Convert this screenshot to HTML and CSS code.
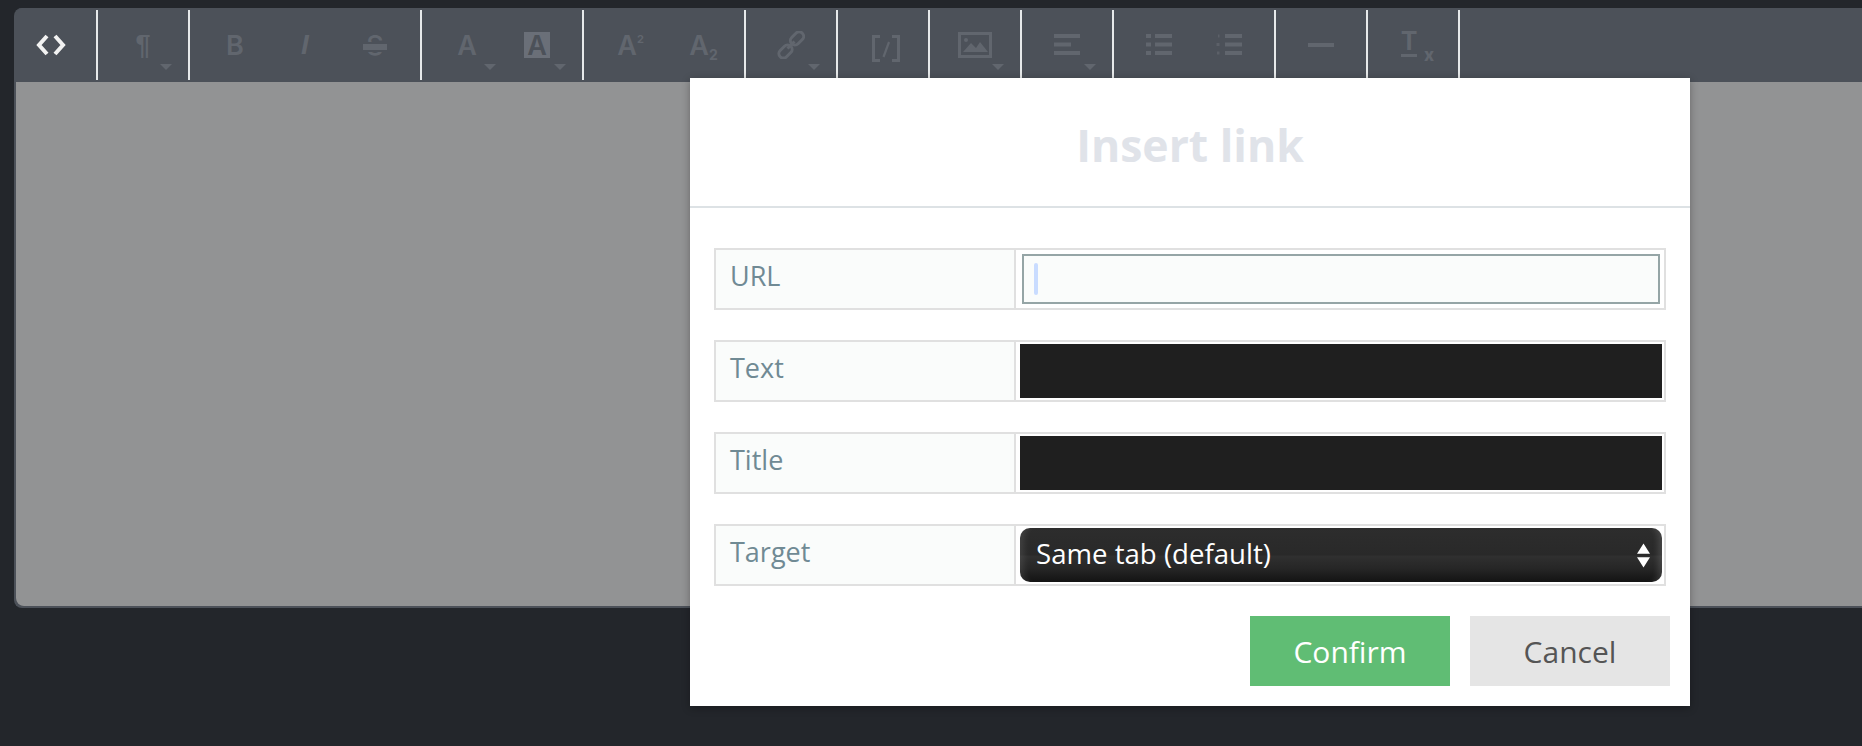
FILE: index.html
```html
<!DOCTYPE html>
<html lang="en">
<head>
<meta charset="utf-8">
<title>Insert link</title>
<link rel="stylesheet" href="styles.css">
</head>
<body>
<div class="editor">
  <div class="toolbar">
    <div class="group first">
      <div class="btn active"><svg width="30" height="22" viewBox="0 0 30 22"><path d="M11 2 3 11l8 9M19 2l8 9-8 9" fill="none" stroke="currentColor" stroke-width="4"/></svg></div>
    </div>
    <div class="group"><div class="btn drop"><span class="glyph para">¶</span></div></div>
    <div class="group">
      <div class="btn"><span class="glyph bold">B</span></div>
      <div class="btn"><span class="glyph ital">I</span></div>
      <div class="btn"><span class="glyph strike">S</span></div>
    </div>
    <div class="group">
      <div class="btn drop"><span class="glyph bold">A</span></div>
      <div class="btn drop"><span class="glyph boxed">A</span></div>
    </div>
    <div class="group">
      <div class="btn"><span class="glyph bold nudge">A</span><span class="sup">2</span></div>
      <div class="btn"><span class="glyph bold">A</span><span class="sub">2</span></div>
    </div>
    <div class="group">
      <div class="btn drop"><svg width="28" height="28" viewBox="0 0 28 28"><g fill="none" stroke="currentColor" stroke-width="3"><rect x="12.500" y="3" width="15" height="9" rx="4.500" transform="rotate(-45 20 7.500)"/><rect x="1" y="16" width="15" height="9" rx="4.500" transform="rotate(-45 8.500 20.500)"/><path d="M10.500 17.500l7-7"/></g></svg></div>
    </div>
    <div class="group">
      <div class="btn"><svg class="shift" width="28" height="27" viewBox="0 0 28 27"><path d="M8 1.500H1.500v24H8M20 1.500h6.500v24H20" fill="none" stroke="currentColor" stroke-width="3"/><path d="M17 7l-5.500 15" fill="none" stroke="currentColor" stroke-width="2.200"/></svg></div>
    </div>
    <div class="group">
      <div class="btn drop"><svg width="34" height="26" viewBox="0 0 34 26"><path d="M1.500 1.500h31v23h-31z" fill="none" stroke="currentColor" stroke-width="3"/><circle cx="8" cy="8" r="2" fill="currentColor"/><path d="M5 20l8-9 5 5 4-6 8 10z" fill="currentColor"/></svg></div>
    </div>
    <div class="group">
      <div class="btn drop"><svg width="26" height="22" viewBox="0 0 26 22"><path d="M0 0h26v4H0zM0 8.500h17v4H0zM0 17h26v4H0z" fill="currentColor"/></svg></div>
    </div>
    <div class="group">
      <div class="btn"><svg width="26" height="22" viewBox="0 0 26 22"><path d="M0 0h5v4H0zM9 0h17v4H9zM0 8.500h5v4H0zM9 8.500h17v4H9zM0 17h5v4H0zM9 17h17v4H9z" fill="currentColor"/></svg></div>
      <div class="btn"><svg width="26" height="22" viewBox="0 0 26 22"><path d="M9 0h17v4H9zM9 8.500h17v4H9zM9 17h17v4H9z" fill="currentColor"/><path d="M2 0.500h1.500v3H2zM0.500 9h3v3h-3zM1 17.500h2.500v3H1z" fill="currentColor" fill-opacity=".75"/></svg></div>
    </div>
    <div class="group">
      <div class="btn"><svg width="26" height="4" viewBox="0 0 26 4"><path d="M0 0h26v4H0z" fill="currentColor"/></svg></div>
    </div>
    <div class="group">
      <div class="btn"><span class="glyph clear">T</span><span class="clear-x">x</span></div>
    </div>
  </div>
  <div class="content"></div>
</div>

<div class="modal">
  <h2 class="modal-title">Insert link</h2>
  <form class="modal-form">
    <div class="row">
      <label class="row-label" for="url">URL</label>
      <div class="row-field focus"><input id="url" class="url" type="text"><span class="cursor"></span></div>
    </div>
    <div class="row">
      <label class="row-label" for="text">Text</label>
      <div class="row-field"><input id="text" class="dark" type="text"></div>
    </div>
    <div class="row">
      <label class="row-label" for="title">Title</label>
      <div class="row-field"><input id="title" class="dark" type="text"></div>
    </div>
    <div class="row">
      <label class="row-label" for="target">Target</label>
      <div class="row-field">
        <select id="target" class="select"><option>Same tab (default)</option></select>
        <svg class="updown" width="13" height="25" viewBox="0 0 14 26"><path d="M7 0l7 11H0zM0 15h14L7 26z" fill="#fff"/></svg>
      </div>
    </div>
    <div class="actions">
      <button class="action confirm" type="button">Confirm</button>
      <button class="action cancel" type="button">Cancel</button>
    </div>
  </form>
</div>
</body>
</html>
```
FILE: styles.css
```css
* { box-sizing: border-box; }
html, body { height: 100%; }
body {
  margin: 0;
  padding: 8px 0 0 14px;
  background: #23262b;
  overflow: hidden;
  font-family: "Open Sans", sans-serif;
}
.editor {
  height: 600px;
  border-left: 2px solid #4c5159;
  border-bottom: 2px solid #4c5159;
  border-radius: 8px 0 0 8px;
  display: flex;
  flex-direction: column;
  overflow: hidden;
  background: #4c5159;
}
.toolbar {
  display: flex;
  height: 74px;
  padding: 2px 0;
  background: #4c5159;
  color: #61666e;
  flex: none;
}
.group {
  display: flex;
  padding: 0 10px;
  border-right: 2px solid #e6e9ea;
  flex: none;
}
.group.first { padding-left: 0; }
.btn {
  position: relative;
  width: 70px;
  height: 70px;
  display: flex;
  align-items: center;
  justify-content: center;
}
.btn.active { color: #f2f2f2; }
.btn.drop::after {
  content: "";
  position: absolute;
  right: 6px;
  top: 54px;
  border-left: 6px solid transparent;
  border-right: 6px solid transparent;
  border-top: 6px solid #61666e;
}
.shift { position: relative; left: 3px; top: 3px; }
.glyph {
  font-family: "Inter", "Liberation Sans", sans-serif;
  font-size: 27px;
  line-height: 1;
  font-weight: 600;
}
.para {
  font-family: "Liberation Sans", sans-serif;
  font-size: 27px;
  font-weight: 700;
}
.ital {
  font-family: "Liberation Sans", sans-serif;
  font-style: italic;
  font-weight: 700;
  font-size: 28px;
}
.nudge { position: relative; left: -2px; }
.strike {
  font-weight: 500;
  position: relative;
}
.strike::after {
  content: "";
  position: absolute;
  left: -3px;
  right: -3px;
  top: 10px;
  height: 6px;
  background: #61666e;
  background-clip: content-box;
  border-top: 2px solid #4c5159;
  border-bottom: 2px solid #4c5159;
}
.boxed {
  width: 26px;
  height: 26px;
  background: #6a6f78;
  color: #4c5159;
  display: flex;
  align-items: center;
  justify-content: center;
  font-size: 27px;
  font-weight: 600;
}
.sup, .sub {
  font-family: "Inter", "Liberation Sans", sans-serif;
  font-weight: 700;
  line-height: 1;
  position: absolute;
}
.sup { font-size: 11px; left: 43px; top: 24px; }
.sub { font-size: 14px; left: 45px; top: 38px; }
.clear {
  font-size: 25px;
  font-weight: 700;
  position: relative;
  left: -4px;
  top: -2px;
  border-bottom: 3px solid #61666e;
}
.clear-x {
  position: absolute;
  left: 46px;
  top: 37px;
  font-family: "Inter", "Liberation Sans", sans-serif;
  font-size: 17px;
  line-height: 1;
  font-weight: 800;
}
.content {
  flex: 1;
  background: #929394;
  border-radius: 0 0 0 8px;
}

.modal {
  position: absolute;
  left: 690px;
  top: 78px;
  width: 1000px;
  height: 628px;
  background: #fff;
  box-shadow: 0 2px 8px rgba(0, 0, 0, .3);
}
.modal-title {
  margin: 0;
  height: 130px;
  line-height: 134px;
  text-align: center;
  font-size: 44.500px;
  font-weight: 700;
  color: #e0e3e9;
  border-bottom: 2px solid #dde2e5;
}
.modal-form {
  padding: 40px 24px 0;
  display: flex;
  flex-direction: column;
  gap: 30px;
}
.row {
  display: flex;
  height: 62px;
  border: 2px solid #e0e0e0;
}
.row-label {
  width: 300px;
  flex: none;
  border-right: 2px solid #e0e0e0;
  background: #fafcfb;
  color: #708a94;
  font-size: 27px;
  line-height: 52px;
  padding-left: 14px;
}
.row-field {
  position: relative;
  flex: 1;
  padding: 2px 2px 2px 4px;
  display: flex;
  background: #fff;
}
.row-field input, .row-field select {
  flex: 1;
  min-width: 0;
  border: 0;
  padding: 0;
  margin: 0;
  outline: 0;
  border-radius: 0;
}
.dark { background: #1f1f1f; }
.row-field.focus { padding: 4px 4px 4px 6px; }
.row-field .url {
  background: #fafcfb;
  border: 2px solid #95a5a6;
}
.cursor {
  position: absolute;
  left: 18px;
  top: 13px;
  width: 4px;
  height: 32px;
  border-radius: 2px;
  background: #c9dcff;
}
.row-field .select {
  appearance: none;
  -webkit-appearance: none;
  height: 54px;
  padding: 0 0 4px 16px;
  border-radius: 10px;
  color: #fff;
  font-family: "Open Sans", sans-serif;
  font-size: 27.600px;
  background: linear-gradient(#2d2d2d 0, #292929 50%, #303030 52%, #262626 75%, #131313 100%);
  box-shadow: inset 10px 0 6px -6px rgba(255, 255, 255, .1), inset -10px 0 6px -6px rgba(255, 255, 255, .13);
}
.updown {
  position: absolute;
  right: 14px;
  top: 17px;
  pointer-events: none;
}
.actions {
  display: flex;
  justify-content: flex-end;
  gap: 20px;
  margin-right: -4px;
}
.action {
  width: 200px;
  height: 70px;
  border: 0;
  padding: 0;
  font-family: "Open Sans", sans-serif;
  font-size: 30px;
}
.confirm { background: #60bd74; color: #fff; }
.cancel { background: #e5e5e5; color: #555; }
```
